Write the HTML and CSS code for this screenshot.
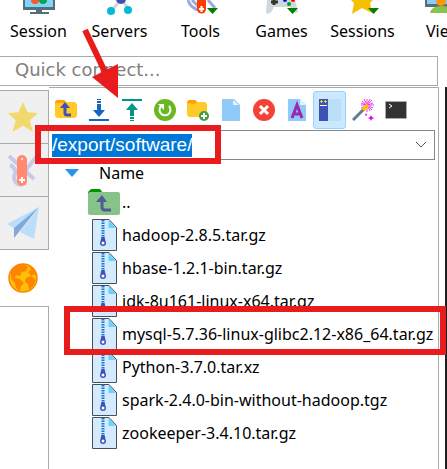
FILE: index.html
```html
<!DOCTYPE html>
<html lang="en">
<head>
<meta charset="utf-8">
<title>File browser</title>
<link rel="stylesheet" href="styles.css">
</head>
<body>
<svg class="defs" aria-hidden="true">
  <symbol id="star" viewBox="0 0 32 32"><path d="M16 1l4.500 10.300L31 12l-8.200 7.400L26 31l-10-6.300L5.500 31l3.200-11.600L1 12l10.500-.7z"/></symbol>
  <symbol id="archive" viewBox="0 0 25 32">
    <path d="M.5.500h16.500l7.500 8v23H.5z" fill="#d4ebff" stroke="#44505a"/>
    <path d="M16.500 1v8H24z" fill="#66d3ff"/>
    <path d="M11 1v19" stroke="#1976d2" stroke-width="3" stroke-dasharray="1.500 1"/>
    <path d="M9.500 18h3l1.500 6a3 3 0 1 1-6 0z" fill="#3f51b5"/><circle cx="11" cy="24" r="1.500" fill="#fff"/>
  </symbol>
</svg>
<header class="ribbon">
  <button class="tool"><svg width="34" height="15" viewBox="0 0 34 15"><path d="M1 0h32v10H1z" fill="#546e7a"/><path d="M3 0h28v7H3z" fill="#81d4fa"/><circle cx="13" cy="0" r="4" fill="#ff5722"/><circle cx="21" cy="0" r="4" fill="#00a651"/><path d="M14 10h6v2H14zM8 12h19v2H8z" fill="#546e7a"/></svg>Session</button>
  <button class="tool"><svg width="34" height="15" viewBox="0 0 34 15"><path d="M8 11L18 0l8 9" fill="none" stroke="#cfd8dc" stroke-width="3"/><circle cx="18" cy="-1" r="5" fill="#3f51b5"/><circle cx="8" cy="11" r="4" fill="#00bcd4"/><circle cx="25" cy="10" r="4" fill="#00bcd4"/></svg>Servers</button>
  <button class="tool"><svg width="34" height="15" viewBox="0 0 34 15"><path d="M4 0q2 7 10 10M8 0l6 6M24 0l7 8" fill="none" stroke="#9fa8da" stroke-width="3"/><path d="M13 0h9v9a4.500 4.500 0 0 1-9 0z" fill="#ff3d00"/><path d="M17.500 6v6M15 9h5" stroke="#fff" stroke-width="2"/><path d="M23 8h11l-5.500 6z" fill="#008000"/></svg>Tools</button>
  <button class="tool"><svg width="34" height="15" viewBox="0 0 34 15"><path d="M2 0h28l3 12q-4 3-8-5H9q-4 9-8 6z" fill="#cfd8dc"/><path d="M9 0v5M6 2h7" stroke="#333" stroke-width="3"/><circle cx="20" cy="0" r="2" fill="#0000ff"/><circle cx="24" cy="4" r="2" fill="#00a000"/><circle cx="28" cy="0" r="2" fill="#ff0000"/><path d="M22 8h11l-5.500 6z" fill="#008000"/></svg>Games</button>
  <button class="tool"><svg width="34" height="15" viewBox="0 0 34 15"><path d="M5 0h22l-3 3 2 10-10-5-10 6 2-11z" fill="#f5c000"/><path d="M22 8h11l-5.500 6z" fill="#008000"/></svg>Sessions</button>
  <button class="tool"><svg width="38" height="15" viewBox="0 0 38 15"><path d="M0 0h38v7H0z" fill="#546e7a"/><path d="M2 0h34v4H2z" fill="#90caf9"/><path d="M5 13q1-7 12-7t15 7z" fill="#8bc34a"/><circle cx="16" cy="1" r="5" fill="#ff9800"/></svg>View</button>
</header>
<input class="quick" aria-label="Quick connect" placeholder="Quick connect...">
<main class="workspace">
  <nav class="tabs">
    <button class="tab" aria-label="Favorites"><svg width="32" height="32" fill="#f1d970"><use href="#star"/></svg></button>
    <button class="tab" aria-label="Tools"><svg width="32" height="34" viewBox="0 0 32 34"><path d="M2 3l25 23M3 12q8 4 4 12q0 7 8 8M30 3L18 18" fill="none" stroke="#c5cae9" stroke-width="4"/><path d="M10 7a5 5 0 0 1 10 0v21a5 5 0 0 1-10 0z" fill="#ff8a70"/><path d="M15 24v6M12 27h6" stroke="#fff" stroke-width="2"/><circle cx="15" cy="6" r="1" fill="#fff"/></svg></button>
    <button class="tab" aria-label="Send"><svg width="32" height="34" viewBox="0 0 32 34"><path d="M32 1L0 18l8 5z" fill="#bbdefb"/><path d="M32 1L7 32V22z" fill="#7fa9d8"/><path d="M32 1L13 26l14 7z" fill="#bbdefb"/></svg></button>
    <button class="tab active" aria-label="Sftp"><svg width="32" height="32" viewBox="0 0 32 32"><circle cx="16" cy="16" r="14" fill="#ffc107" stroke="#ff8500" stroke-width="1.500"/><path d="M4 9q5-7 13-7l4 3-2 4-4 1-2 4-4-1-1 3 5 1 4 4-3 3-1 5-4-3-1-5-4-4zM22 4q6 3 8 11l-3-3-3 2-3-4 3-2zM19 16l5-2 5 4-3 6-4 4-1-6-3-2z" fill="#ff8500"/></svg></button>
    <div class="tab-rest"></div>
  </nav>
  <section class="panel">
    <div class="toolbar">
      <button aria-label="Parent folder"><svg viewBox="0 0 22 22"><path d="M0 4V3l2-2h7l2 2h9l2 2v12l-2 2H2l-2-2z" fill="#ffca28"/><path d="M0 4V3l2-2h7l2 2-2 1z" fill="#ffa000"/><path d="M10 8v6q0 2 2 2h4" fill="none" stroke="#3f51b5" stroke-width="3"/><path d="M5 9l5-6 5 6z" fill="#3f51b5"/></svg></button>
      <button aria-label="Download"><svg viewBox="0 0 22 22"><path d="M9 0h4v1H9zM9 2h4v2H9zM9 5h4v6h4l-6 7-6-7h4zM1 20h20v2H1z" fill="#1565c0"/></svg></button>
      <button aria-label="Upload"><svg viewBox="0 0 22 22"><path d="M9 22h4v-1H9zM9 20h4v-2H9zM9 17h4v-6h4l-6-7-6 7h4zM1 0h20v2H1z" fill="#009688"/></svg></button>
      <button aria-label="Refresh"><svg viewBox="0 0 22 22"><circle cx="11" cy="11" r="11" fill="#6ab820"/><path d="M15 7a5.500 5.500 0 1 1-8 0" fill="none" stroke="#fff" stroke-width="2"/><path d="M4 5h6v6z" fill="#fff"/></svg></button>
      <button aria-label="New folder"><svg viewBox="0 0 22 22"><path d="M0 3l2-2h6l2 2h8l2 2v13H2l-2-2z" fill="#ffca28"/><path d="M0 4V3l2-2h6l2 2-2 2z" fill="#ffa000"/><circle cx="17" cy="17" r="5" fill="#43a047"/><path d="M17 14v6M14 17h6" stroke="#fff" stroke-width="2"/></svg></button>
      <button aria-label="New file"><svg viewBox="0 0 22 22"><path d="M2 0h12l6 6v16H2z" fill="#90caf9"/><path d="M13 1v5h6z" fill="#e1f5fe"/></svg></button>
      <button aria-label="Delete"><svg viewBox="0 0 22 22"><circle cx="11" cy="11" r="11" fill="#f44336"/><path d="M7 7l8 8M15 7l-8 8" stroke="#fff" stroke-width="3"/></svg></button>
      <button aria-label="Rename"><svg viewBox="0 0 22 22"><path d="M2 0h12l6 6v16H2z" fill="#90caf9"/><path d="M14 0v6h6z" fill="#e1f5fe"/><path d="M6 19l5-13 5 13M8 15h6" fill="none" stroke="#9c27b0" stroke-width="3"/></svg></button>
      <button class="on" aria-label="Show panel"><svg viewBox="0 0 22 22"><path d="M8 0h14v22H8z" fill="#bbdefb"/><path d="M0 0h9v22H0z" fill="#3f51b5"/><path d="M1 2.500h3M2.500 1v3M5 2.500h3M6.500 1v3" stroke="#cddc39"/><path d="M1 6.500h7" stroke="#fff"/></svg></button>
      <button aria-label="Magic wand"><svg viewBox="0 0 22 22"><path d="M15 0v13M9 6h13M10 2l10 9M20 1l-9 10M12 0l6 12M9 4l12 5M18 0l-6 12M9 9l12-5" stroke="#e83cf0"/><path d="M1 21L12 10" stroke="#607d8b" stroke-width="3"/><path d="M11 11l5-5" stroke="#ffc107" stroke-width="4"/><path d="M19 16l1 2 2 1-2 1-1 2-1-2-2-1 2-1zM14 14l1 2-1 1-1-1z" fill="#e000f0"/></svg></button>
      <button aria-label="Terminal"><svg viewBox="0 0 22 22"><path d="M.5 2.500h21v17H.5z" fill="#333" stroke="#aaa"/><path d="M4 5l3 2-3 2" fill="none" stroke="#fff"/></svg></button>
    </div>
    <div class="path">
      <input aria-label="Path" value="/export/software/">
      <button aria-label="Path history"><svg width="12" height="8" viewBox="0 0 12 8"><path d="M1 1l5 5 5-5" fill="none" stroke="#555"/></svg></button>
    </div>
    <table class="files">
      <thead><tr><th scope="col"><div class="head"><svg width="14" height="8" viewBox="0 0 14 8"><path d="M0 0h14L7 8z" fill="#2196f3"/></svg>Name</div></th></tr></thead>
      <tbody>
        <tr><td><div class="row up"><svg width="32" height="26" viewBox="0 0 32 26"><path d="M0 8V3l3-3h9l3 4v4z" fill="#009600"/><rect y="3" width="32" height="23" rx="2" fill="#86c388"/><path d="M14 12v6q0 3 3 3h6" fill="none" stroke="#515a93" stroke-width="3"/><path d="M8 13l6-7 5 7z" fill="#515a93"/></svg>..</div></td></tr>
        <tr><td><div class="row"><svg><use href="#archive"/></svg>hadoop-2.8.5.tar.gz</div></td></tr>
        <tr><td><div class="row"><svg><use href="#archive"/></svg>hbase-1.2.1-bin.tar.gz</div></td></tr>
        <tr><td><div class="row"><svg><use href="#archive"/></svg>jdk-8u161-linux-x64.tar.gz</div></td></tr>
        <tr><td><div class="row"><svg><use href="#archive"/></svg>mysql-5.7.36-linux-glibc2.12-x86_64.tar.gz</div></td></tr>
        <tr><td><div class="row"><svg><use href="#archive"/></svg>Python-3.7.0.tar.xz</div></td></tr>
        <tr><td><div class="row"><svg><use href="#archive"/></svg>spark-2.4.0-bin-without-hadoop.tgz</div></td></tr>
        <tr><td><div class="row"><svg><use href="#archive"/></svg>zookeeper-3.4.10.tar.gz</div></td></tr>
      </tbody>
    </table>
  </section>
  <div class="edge"></div>
</main>
<div class="mark mark-path"></div>
<div class="mark mark-file"></div>
<svg class="arrow" width="40" height="70" viewBox="0 0 40 70"><path d="M4 1l20 42" stroke="#e81c1c" stroke-width="6"/><path d="M11 48l26-13v34z" fill="#e81c1c"/></svg>
</body>
</html>
```

FILE: styles.css
```css
* { box-sizing: border-box; }
body {
  margin: 0;
  min-height: 100vh;
  display: flex;
  flex-direction: column;
  overflow: hidden;
  background: #fff;
  color: #000;
  font: 16px/20px "Noto Sans", sans-serif;
}
button { padding: 0; border: 0; background: none; color: inherit; font: inherit; }
svg { display: block; flex: none; }
.defs { position: absolute; width: 0; height: 0; }

.ribbon { display: flex; height: 56px; margin-left: -2px; overflow: hidden; }
.tool {
  flex: 0 0 81px;
  display: flex;
  flex-direction: column;
  align-items: center;
  gap: 6px;
}

.quick {
  height: 30px;
  margin: 0 9px 0 0;
  padding: 0 0 4px 15px;
  border: 1px solid #aaa;
  border-left: 0;
  outline: 0;
  background: #fff;
  font: 18px "DejaVu Sans", sans-serif;
}
.quick::placeholder { color: #808080; opacity: 1; }

.workspace { flex: 1; display: flex; margin-top: 1px; }
.tabs { width: 49px; display: flex; flex-direction: column; padding-top: 3px; }
.tab {
  height: 53px;
  display: flex;
  align-items: center;
  padding-left: 7px;
  border-top: 1px solid #aaa;
  border-right: 1px solid #aaa;
  background: #f0f0f0;
}
.tab.active { height: 57px; background: #fff; border-right: 0; }
.tab-rest { flex: 1; border: solid #aaa; border-width: 1px 1px 0 0; }

.panel {
  flex: 1;
  min-width: 0;
  border: solid #aaa;
  border-width: 1px 1px 0 0;
  padding: 3px 0 0;
}
.toolbar { display: flex; height: 39px; }
.toolbar button {
  width: 33px;
  height: 38px;
  display: grid;
  place-items: center;
  border-radius: 3px;
}
.toolbar svg { width: 22px; height: 22px; }
.toolbar .on { background: #cce8ff; border: 1px solid #99d1ff; }

.path {
  display: flex;
  align-items: center;
  justify-content: space-between;
  height: 30px;
  margin-right: 3px;
  padding: 0 7px 0 3px;
  border: 1px solid #888;
  border-left: 0;
}
.path input {
  field-sizing: content;
  height: 23px;
  padding: 0;
  border: 0;
  outline: 0;
  background: #0078d7;
  color: #fff;
  font: 19px "Liberation Sans", sans-serif;
}

.files { border-collapse: collapse; }
.files th, .files td { padding: 0; font-weight: 400; text-align: left; white-space: nowrap; }
.head { display: flex; align-items: center; gap: 20px; height: 25px; padding-left: 16px; }
.row { display: flex; align-items: center; gap: 5px; height: 33px; padding-left: 43px; }
.row svg { width: 25px; height: 32px; }
.row.up { gap: 2px; padding-left: 39px; }
.row.up svg { width: 32px; height: 26px; }

.edge { width: 2px; margin-left: 6px; background: #1e1e1e; }

.mark { position: absolute; border: 6px solid #e81c1c; }
.mark-path { left: 35px; top: 125px; width: 186px; height: 39px; }
.mark-file { left: 64px; top: 306px; width: 382px; height: 49px; }
.arrow { position: absolute; left: 81px; top: 29px; }
```
